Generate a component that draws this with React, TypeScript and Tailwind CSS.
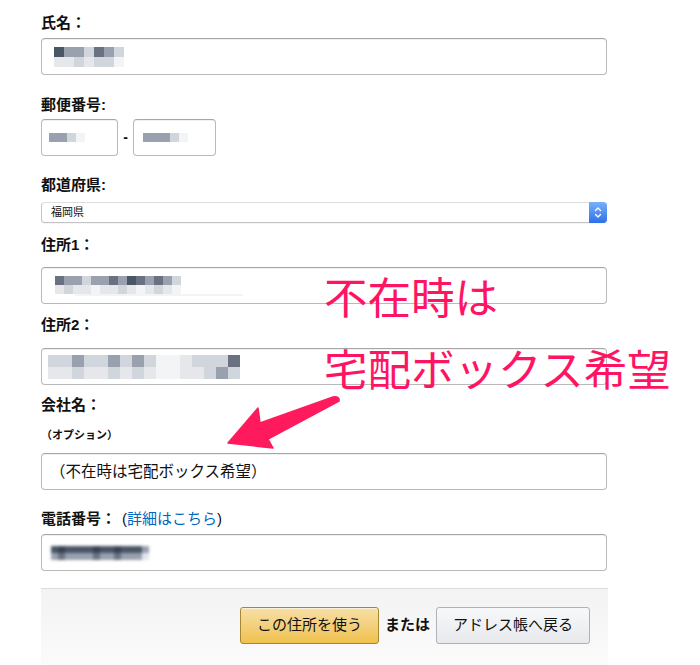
import React from 'react';

const shade: Record<string, string> = {
  '1': 'bg-gray-100',
  '2': 'bg-gray-200',
  '3': 'bg-gray-300',
  '4': 'bg-gray-400',
  '5': 'bg-gray-500',
  '6': 'bg-gray-600',
  '7': 'bg-gray-700',
  '.': 'bg-transparent',
};

// pixelated blur used to hide personal data
function Mosaic({ rows, cell = 7, soft = false }: { rows: string[]; cell?: number; soft?: boolean }) {
  return (
    <div className={soft ? 'flex flex-col blur-[1.5px]' : 'flex flex-col blur-[0.4px]'}>
      {rows.map((row, i) => (
        <div key={i} className="flex">
          {row.split('').map((c, j) => (
            <div key={j} className={shade[c]} style={{ width: cell, height: cell }} />
          ))}
        </div>
      ))}
    </div>
  );
}

function Label({ children }: { children: React.ReactNode }) {
  return <div className="text-[15px] font-bold leading-[20px] text-[#111]">{children}</div>;
}

function Field({ className = '', children }: { className?: string; children?: React.ReactNode }) {
  return (
    <div
      className={
        'h-[37px] rounded-[4px] border border-[#b9b9b9] border-t-[#a6a6a6] bg-white shadow-[inset_0_1px_0_rgba(0,0,0,0.06)] flex items-center ' +
        className
      }
    >
      {children}
    </div>
  );
}

export default function App() {
  return (
    <div
      className="relative h-[665px] w-[700px] overflow-hidden bg-white text-[#111]"
      style={{ fontFamily: '"Liberation Sans", "Noto Sans CJK JP", sans-serif' }}
    >
      <div className="ml-[41px] w-[567px] pt-[13px]">
        <Label>氏名：</Label>
        <Field className="mt-[5px] w-[566px] pl-[12px]">
          <Mosaic rows={['6443543', '2232331']} cell={10} />
        </Field>

        <div className="mt-[20px]">
          <Label>郵便番号:</Label>
        </div>
        <div className="mt-[4px] flex items-center">
          <Field className="w-[77px] pl-[7px]">
            <Mosaic rows={['4431']} cell={9} />
          </Field>
          <span className="w-[15px] text-center text-[14px] font-bold">-</span>
          <Field className="w-[83px] pl-[9px]">
            <Mosaic rows={['44431']} cell={9} />
          </Field>
        </div>

        <div className="mt-[19px]">
          <Label>都道府県:</Label>
        </div>
        <div className="mt-[7px] flex h-[21px] w-[566px] rounded-[4px] border border-[#c4c4c4] border-t-[#dedede] bg-white shadow-[0_1px_0_rgba(0,0,0,0.04)]">
          <div className="flex flex-1 items-center pl-[9px] text-[11px]">福岡県</div>
          <div className="-my-px -mr-px flex w-[18px] items-center justify-center rounded-r-[4px] bg-gradient-to-b from-[#79b0fa] to-[#2f6fe8]">
            <svg width="8" height="13" viewBox="0 0 8 13" fill="none" stroke="white" strokeWidth="1.4" strokeLinecap="round" strokeLinejoin="round">
              <path d="M1.5 4.5 L4 2 L6.5 4.5" />
              <path d="M1.5 8.5 L4 11 L6.5 8.5" />
            </svg>
          </div>
        </div>

        <div className="mt-[12px]">
          <Label>住所1：</Label>
        </div>
        <Field className="mt-[12px] w-[566px] pl-[13px]">
          <div className="flex flex-col">
            <Mosaic rows={['54434454654543', '23221223212321']} cell={9} />
            <div className="ml-[20px] h-[2px] w-[168px] bg-gray-100" />
          </div>
        </Field>

        <div className="mt-[11px]">
          <Label>住所2：</Label>
        </div>
        <Field className="mt-[13px] w-[566px] pl-[6px]">
          <Mosaic rows={['3343343431123335.', '2232232321122343.']} cell={12} />
        </Field>

        <div className="mt-[10px]">
          <Label>会社名：</Label>
        </div>
        <div className="mt-[12px] text-[11px] font-bold leading-[16px]">（オプション）</div>
        <Field className="mt-[10px] w-[566px] pl-[8px]">
          <span className="text-[15.5px]">（不在時は宅配ボックス希望）</span>
        </Field>

        <div className="mt-[19px] flex items-baseline">
          <Label>電話番号：</Label>
          <span className="ml-[6px] text-[15px] leading-[20px]">
            (<span className="text-[#0066c0]">詳細はこちら</span>)
          </span>
        </div>
        <Field className="mt-[5px] w-[566px] pl-[9px]">
          <Mosaic rows={['67666676676664', '45444454454442']} cell={7} soft />
        </Field>

        <div className="mt-[17px] h-[80px] border-t border-[#dcdcdc] bg-gradient-to-b from-[#f3f3f3] to-[#fbfbfb] pt-[18px] pr-[18px]">
          <div className="flex items-center justify-end">
            <button className="h-[37px] w-[139px] rounded-[3px] border border-[#a88734] bg-gradient-to-b from-[#f7dfa5] to-[#f0c14b] text-[15px] text-[#111] shadow-[inset_0_1px_0_rgba(255,255,255,0.6)]">
              この住所を使う
            </button>
            <span className="mx-[6px] text-[15px] font-bold">または</span>
            <button className="h-[37px] w-[154px] rounded-[3px] border border-[#adb1b8] bg-gradient-to-b from-[#f7f8fa] to-[#e7e9ec] text-[15px] text-[#111]">
              アドレス帳へ戻る
            </button>
          </div>
        </div>
      </div>

      {/* handwritten note over the form */}
      <div className="absolute left-[324px] top-[260px] text-[43.5px] leading-[72px] text-[#ff1463]" style={{ fontFamily: '"Noto Sans CJK JP", sans-serif' }}>
        <div>不在時は</div>
        <div>宅配ボックス希望</div>
      </div>

      <svg className="absolute left-0 top-0" width="700" height="665" viewBox="0 0 700 665">
        <path
          d="M228 443 L258 408 L260 423 L333 397 Q340 396 339 401 L268 439 L273 448 Z"
          fill="#ff1a5e"
          stroke="#ff1a5e"
          strokeWidth="1.5"
          strokeLinejoin="round"
        />
      </svg>
    </div>
  );
}
